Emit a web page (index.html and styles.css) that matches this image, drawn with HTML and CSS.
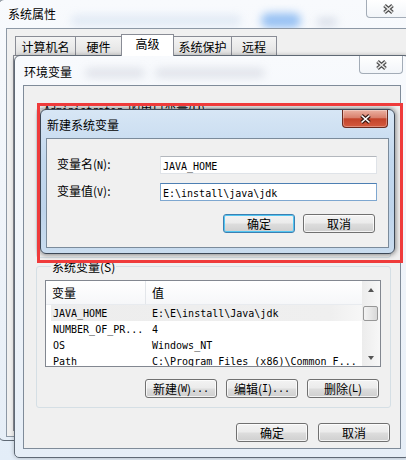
FILE: index.html
```html
<!DOCTYPE html>
<html lang="zh-CN">
<head>
<meta charset="utf-8">
<title>环境变量</title>
<link rel="stylesheet" href="styles.css">
</head>
<body>
<section class="win sys">
  <header class="tbar sys-tbar">
    <span class="blob sb1"></span><span class="blob sb2"></span><span class="blob sb3"></span>
    <span class="ttl">系统属性</span>
    <div class="cls cls-off"><svg width="13" height="10" viewBox="0 0 13 10"><path d="M2.5 1.5 L10.5 8.5 M10.5 1.5 L2.5 8.5" stroke="#4b4b4b" stroke-width="3.8" fill="none"/><path d="M2.5 1.5 L10.5 8.5 M10.5 1.5 L2.5 8.5" stroke="#e9e9e9" stroke-width="1.6" fill="none"/></svg></div>
  </header>
  <div class="sys-body">
    <div class="tabs">
      <span class="tab t1">计算机名</span>
      <span class="tab t2">硬件</span>
      <span class="tab t3 on">高级</span>
      <span class="tab t4">系统保护</span>
      <span class="tab t5">远程</span>
    </div>
    <div class="tabpanel"></div>
  </div>
</section>

<section class="win env">
  <header class="tbar env-tbar">
    <span class="blob eb1"></span><span class="blob eb2"></span>
    <span class="ttl">环境变量</span>
    <div class="cls cls-off"><svg width="13" height="10" viewBox="0 0 13 10"><path d="M2.5 1.5 L10.5 8.5 M10.5 1.5 L2.5 8.5" stroke="#4b4b4b" stroke-width="3.8" fill="none"/><path d="M2.5 1.5 L10.5 8.5 M10.5 1.5 L2.5 8.5" stroke="#e9e9e9" stroke-width="1.6" fill="none"/></svg></div>
  </header>
  <div class="env-body">
    <div class="group g-user">
      <span class="glabel"><span class="m">Administrator </span>的用户变量(U)</span>
    </div>
    <div class="group g-sys">
      <span class="glabel">系统变量(S)</span>
      <div class="lv">
        <div class="lv-main">
          <div class="lv-head"><span class="h1">变量</span><span class="h2">值</span></div>
          <div class="row sel"><span class="c1 m">JAVA_HOME</span><span class="c2 m">E:\E\install\Java\jdk</span></div>
          <div class="row"><span class="c1 m">NUMBER_OF_PR...</span><span class="c2 m">4</span></div>
          <div class="row"><span class="c1 m">OS</span><span class="c2 m">Windows_NT</span></div>
          <div class="row"><span class="c1 m">Path</span><span class="c2 m">C:\Program Files (x86)\Common F...</span></div>
        </div>
        <div class="sbar">
          <div class="sb-btn"><span class="arr up"></span></div>
          <div class="thumb"></div>
          <div class="sb-fill"></div>
          <div class="sb-btn"><span class="arr down"></span></div>
        </div>
      </div>
      <div class="btnrow">
        <div class="btn">新建(<span class="m">W</span>)<span class="m">...</span></div>
        <div class="btn">编辑(<span class="m">I</span>)<span class="m">...</span></div>
        <div class="btn">删除(<span class="m">L</span>)</div>
      </div>
    </div>
    <div class="btnrow bottom">
      <div class="btn">确定</div>
      <div class="btn">取消</div>
    </div>
  </div>
</section>

<section class="dlg">
  <header class="tbar dlg-tbar">
    <span class="ttl">新建系统变量</span>
    <div class="cls cls-red"><svg width="13" height="10" viewBox="0 0 13 10"><path d="M2.5 1.5 L10.5 8.5 M10.5 1.5 L2.5 8.5" stroke="#3a1a14" stroke-width="3.8" fill="none"/><path d="M2.5 1.5 L10.5 8.5 M10.5 1.5 L2.5 8.5" stroke="#ffffff" stroke-width="1.6" fill="none"/></svg></div>
  </header>
  <div class="dlg-panel">
    <div class="frow">
      <span class="flabel">变量名(<span class="m">N</span>):</span>
      <div class="inp"><span class="m">JAVA_HOME</span></div>
    </div>
    <div class="frow">
      <span class="flabel">变量值(<span class="m">V</span>):</span>
      <div class="inp focus"><span class="m">E:\install\java\jdk</span></div>
    </div>
    <div class="btnrow dlg-btns">
      <div class="btn def">确定</div>
      <div class="btn">取消</div>
    </div>
  </div>
</section>

<div class="redbox"></div>
</body>
</html>
```

FILE: styles.css
```css
* { box-sizing: border-box; margin: 0; padding: 0; }

body {
  margin: 0;
  width: 406px;
  height: 460px;
  overflow: hidden;
  position: relative;
  background: linear-gradient(180deg, #f3f7fc 0%, #e3edf8 100%);
  font-family: "Noto Sans CJK SC", "Liberation Sans", sans-serif;
  font-size: 12px;
  color: #000;
}

.m {
  font-family: "DejaVu Sans Mono", "Liberation Mono", monospace;
  font-size: 10px;
}

/* windows */
.win {
  position: absolute;
  border: 1px solid #5f6975;
  background: linear-gradient(180deg, #f8fafd 0%, #eef3f9 60%, #e6eef7 100%);
  display: flex;
  flex-direction: column;
}

.tbar {
  position: relative;
  flex: none;
  display: flex;
  align-items: center;
  overflow: hidden;
}

.ttl { position: relative; line-height: 14px; }

.blob {
  position: absolute;
  border-radius: 8px;
  filter: blur(4px);
}

.cls {
  position: absolute;
  top: 0;
  right: 6px;
  height: 18px;
  display: flex;
  align-items: center;
  justify-content: center;
  border-radius: 0 0 4px 4px;
}
.cls-off {
  width: 44px;
  border: 1px solid #a3acb7;
  border-top: none;
  background: linear-gradient(180deg, #ffffff 0%, #f2f5f9 100%);
}
.cls-red {
  width: 46px;
  right: auto;
  left: 301px;
  border: 1px solid #6b2a1f;
  border-top: none;
  background: linear-gradient(180deg, #ecb2a3 0%, #d9806d 45%, #c3432a 52%, #d45a3f 100%);
  box-shadow: inset 0 0 0 1px rgba(255,255,255,0.3);
}

/* 系统属性 */
.sys {
  left: -2px;
  top: -1px;
  width: 419px;
  height: 442px;
  border-radius: 6px;
}
.sys-tbar { height: 28px; padding-left: 9px; }
.sb1 { left: 262px; top: 13px; width: 40px; height: 15px; background: rgba(120,175,240,0.75); }
.sb2 { left: 72px; top: 15px; width: 170px; height: 11px; background: rgba(150,180,220,0.22); }
.sb3 { left: 318px; top: 18px; width: 20px; height: 8px; background: rgba(120,140,170,0.25); }

.sys-body {
  flex: 1;
  margin: 0 6px 3px 7px;
  background: #f0f0f0;
  border: 1px solid #8d98a5;
  padding: 5px 0 5px 6px;
  display: flex;
  flex-direction: column;
}
.tabs {
  display: flex;
  align-items: flex-end;
  height: 21px;
  padding-left: 2px;
}
.tab {
  height: 19px;
  margin-right: -1px;
  border: 1px solid #898c95;
  border-bottom: none;
  background: linear-gradient(180deg, #f4f4f4 0%, #ebebeb 50%, #e0e0e0 100%);
  text-align: center;
  line-height: 19px;
}
.t1 { width: 61px; }
.t2 { width: 47px; }
.t3 { width: 53px; }
.t4 { width: 59px; }
.t5 { width: 46px; }
.tab.on {
  height: 22px;
  margin-bottom: -1px;
  background: #fff;
  position: relative;
  z-index: 1;
  line-height: 18px;
}
.tabpanel {
  flex: 1;
  background: #fff;
  border: 1px solid #898c95;
}

/* 环境变量 */
.env {
  left: 14px;
  top: 55px;
  width: 396px;
  height: 403px;
  border-radius: 6px 6px 5px 5px;
  box-shadow: 0 0 4px rgba(0,0,0,0.25);
}
.env-tbar { height: 29px; padding: 3px 0 0 9px; }
.eb1 { left: 70px; top: 12px; width: 60px; height: 10px; background: rgba(110,120,145,0.16); }
.eb2 { left: 140px; top: 12px; width: 110px; height: 10px; background: rgba(110,120,145,0.16); }

.env-body {
  flex: 1;
  margin: 0 8px 8px 8px;
  background: #f0f0f0;
  border: 1px solid #7f8b99;
  padding: 0 9px 0 12px;
  display: flex;
  flex-direction: column;
}

.group {
  border: 1px solid #d5dfe5;
  border-radius: 3px;
  display: flex;
  flex-direction: column;
}
.glabel {
  align-self: flex-start;
  margin: -7px 0 0 6px;
  padding: 0 1px;
  line-height: 14px;
  background: #f0f0f0;
}
.g-user { margin-top: 22px; height: 150px; }
.g-user .glabel { margin-top: -6px; line-height: 12px; }
.g-sys { margin-top: 8px; padding: 0 0 9px 8px; }

.lv {
  margin: 6px 9px 0 0;
  height: 87px;
  border: 1px solid #828790;
  background: #fff;
  display: flex;
  overflow: hidden;
}
.lv-main { flex: 1; overflow: hidden; }
.lv-head {
  display: flex;
  height: 24px;
  background: linear-gradient(180deg, #ffffff 0%, #f6f7f9 100%);
  border-bottom: 1px solid #e8ebef;
  line-height: 23px;
}
.h1 { width: 100px; padding-left: 6px; border-right: 1px solid #e3e6ea; }
.h2 { padding-left: 6px; }
.row {
  display: flex;
  height: 16px;
  margin-left: 5px;
  padding-top: 1px;
  line-height: 16px;
  white-space: nowrap;
}
.row.sel { background: linear-gradient(90deg, #ededed 0%, #efefef 90%, #f7f7f7 100%); }
.c1 { width: 99px; padding-left: 2px; }
.c2 { padding-left: 2px; }

.sbar {
  width: 18px;
  flex: none;
  background: linear-gradient(90deg, #ececec 0%, #f7f7f7 100%);
  display: flex;
  flex-direction: column;
}
.sb-btn {
  height: 17px;
  display: flex;
  align-items: center;
  justify-content: center;
}
.arr { width: 0; height: 0; border-left: 3.5px solid transparent; border-right: 3.5px solid transparent; }
.arr.up { border-bottom: 4px solid #555; }
.arr.down { border-top: 4px solid #555; }
.thumb {
  margin: 8px 0 0 1px;
  width: 15px;
  height: 15px;
  border: 1px solid #979797;
  border-radius: 2px;
  background: linear-gradient(90deg, #f3f3f3 0%, #e7e7e7 50%, #d8d8d8 100%);
}
.sb-fill { flex: 1; }

.btnrow {
  display: flex;
  justify-content: flex-end;
  gap: 9px;
  margin: 12px 11px 0 0;
}
.btnrow.bottom { margin: 15px 1px 0 0; gap: 10px; }
.btn {
  width: 72px;
  height: 19px;
  border: 1px solid #707070;
  border-radius: 3px;
  background: linear-gradient(180deg, #f3f3f3 0%, #ebebeb 48%, #dddddd 52%, #cfcfcf 100%);
  box-shadow: inset 0 0 0 1px rgba(255,255,255,0.75);
  display: flex;
  align-items: center;
  justify-content: center;
  line-height: 17px;
  white-space: nowrap;
}
.btn.def {
  border-color: #3c7fb1;
  box-shadow: inset 0 0 0 1px #52c6f2;
}

/* 新建系统变量 */
.dlg {
  position: absolute;
  left: 40px;
  top: 109px;
  width: 355px;
  height: 145px;
  border: 1px solid #3d4856;
  border-radius: 6px;
  background: linear-gradient(180deg, #d7e6f5 0%, #c2d8ee 35%, #bed4eb 70%, #c9dcef 100%);
  box-shadow: 0 0 5px 1px rgba(0,0,0,0.45);
  display: flex;
  flex-direction: column;
}
.dlg-tbar { height: 28px; padding: 2px 0 0 6px; }
.dlg-panel {
  flex: 1;
  margin: 0 5px 5px 5px;
  background: #f0f0f0;
  border: 1px solid #7b8b9b;
  padding: 17px 11px 0 10px;
  display: flex;
  flex-direction: column;
  gap: 9px;
}
.frow { display: flex; align-items: center; }
.flabel { width: 103px; line-height: 14px; }
.inp {
  width: 217px;
  height: 18px;
  background: #fff;
  border: 1px solid #dfe3e8;
  border-top-color: #b3b7bd;
  padding-left: 2px;
  line-height: 16px;
  white-space: nowrap;
}
.inp.focus {
  border-color: #7ea7d0;
  border-top-color: #4d7fb3;
}
.dlg-btns { margin: 4px 2px 0 0; gap: 8px; }

/* 标注红框 */
.redbox {
  position: absolute;
  left: 37px;
  top: 103px;
  width: 366px;
  height: 160px;
  border: 3px solid #ef3b3b;
}
```
